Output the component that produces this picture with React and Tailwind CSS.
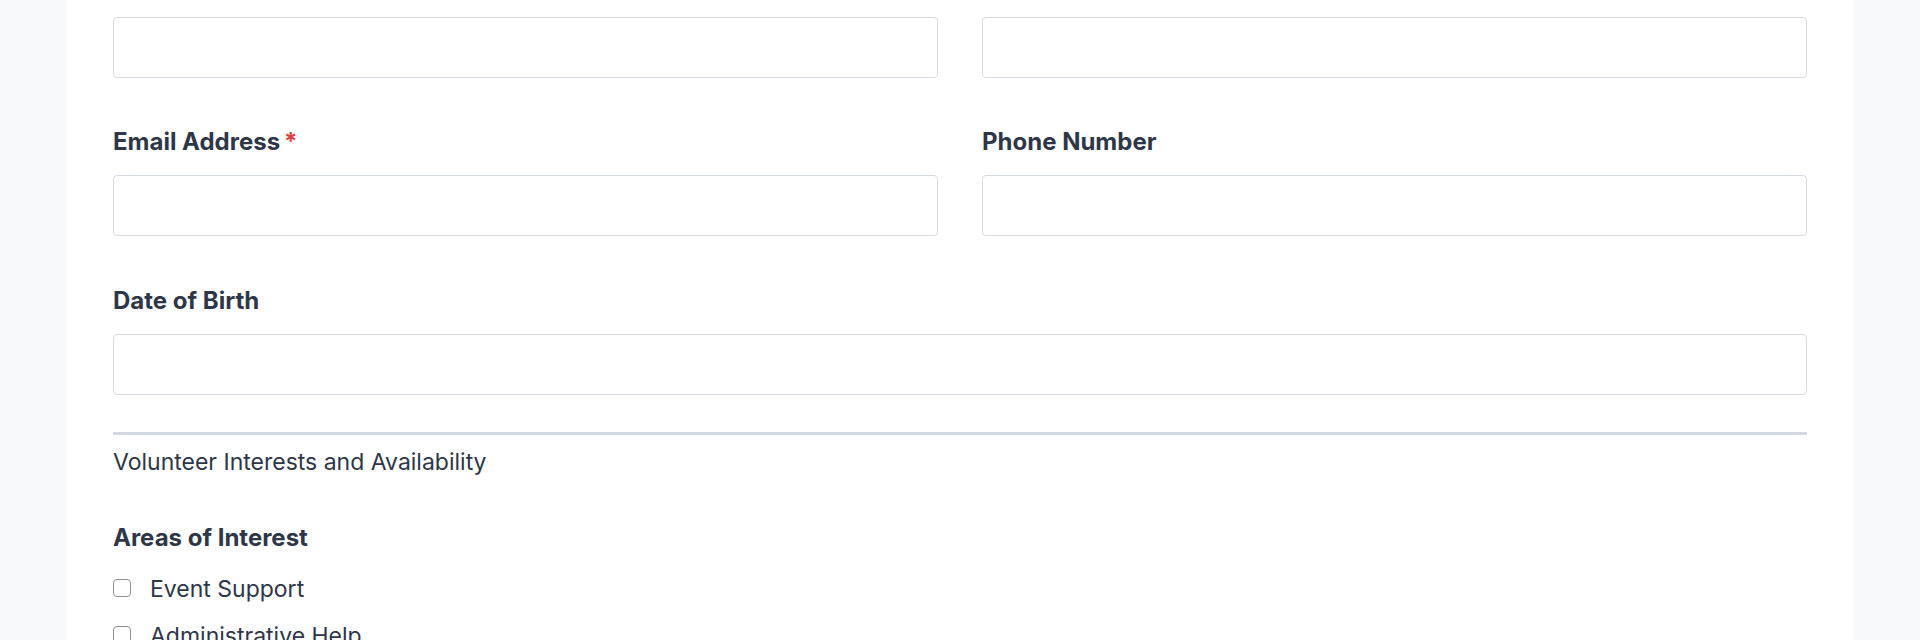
import React from 'react';

const inputClass =
  'block w-full h-[61px] rounded-[4px] border border-[#d6dbe4] bg-white px-4 text-[22px] text-[#2d3748] outline-none';

const Field = ({ label, required, className = '' }) => (
  <div className={className}>
    <label className="block text-[24px] leading-[32px] font-bold text-[#2d3748] mb-[17px]">
      {label}
      {required && <span className="text-[#e53e3e] ml-[4px]">*</span>}
    </label>
    <input type="text" className={inputClass} />
  </div>
);

const Check = ({ label }) => (
  <label className="flex items-center gap-[19px] h-[47px]">
    <input
      type="checkbox"
      className="appearance-none w-[18px] h-[18px] rounded-[4px] border border-[#8a8f98] bg-white shrink-0 -mt-[2px]"
    />
    <span className="text-[23px] leading-[30px] text-[#2d3748]">{label}</span>
  </label>
);

export default function App() {
  return (
    <div
      className="min-h-screen bg-[#f8f9fb] px-[67px]"
      style={{ fontFamily: 'Inter, "Noto Sans", "Liberation Sans", sans-serif' }}
    >
      <div className="bg-white px-[46px] pt-[17px] h-[640px] overflow-hidden">
        <div className="grid grid-cols-2 gap-x-[44px]">
          <input type="text" className={inputClass} />
          <input type="text" className={inputClass} />
          <Field label="Email Address" required className="mt-[48px]" />
          <Field label="Phone Number" className="mt-[48px]" />
        </div>
        <Field label="Date of Birth" className="mt-[49px]" />

        <div className="mt-[37px] border-t-[3px] border-[#d2d9e3]" />
        <h3 className="mt-[11px] text-[23px] leading-[32px] text-[#2d3748]">
          Volunteer Interests and Availability
        </h3>

        <div className="mt-[44px]">
          <div className="text-[24px] leading-[32px] font-bold text-[#2d3748] mb-[11px]">
            Areas of Interest
          </div>
          <Check label="Event Support" />
          <Check label="Administrative Help" />
          <Check label="Community Outreach" />
        </div>
      </div>
    </div>
  );
}
